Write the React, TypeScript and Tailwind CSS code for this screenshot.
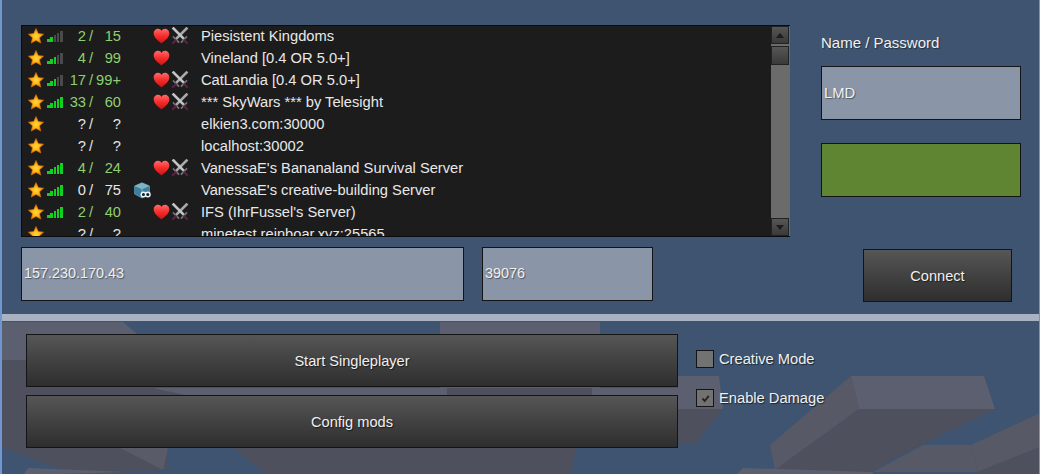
const font = "font-['Liberation_Sans',Arial,sans-serif]";

type Server = {
    cur: string;
    max: string;
    bars: number;
    name: string;
    tone: "green" | "white";
    heart?: boolean;
    swords?: boolean;
    creative?: boolean;
};

const servers: Server[] = [
    { cur: "2", max: "15", bars: 2, name: "Piesistent Kingdoms", tone: "green", heart: true, swords: true },
    { cur: "4", max: "99", bars: 3, name: "Vineland [0.4 OR 5.0+]", tone: "green", heart: true },
    { cur: "17", max: "99+", bars: 3, name: "CatLandia [0.4 OR 5.0+]", tone: "green", heart: true, swords: true },
    { cur: "33", max: "60", bars: 5, name: "*** SkyWars *** by Telesight", tone: "green", heart: true, swords: true },
    { cur: "?", max: "?", bars: 0, name: "elkien3.com:30000", tone: "white" },
    { cur: "?", max: "?", bars: 0, name: "localhost:30002", tone: "white" },
    { cur: "4", max: "24", bars: 5, name: "VanessaE's Bananaland Survival Server", tone: "green", heart: true, swords: true },
    { cur: "0", max: "75", bars: 5, name: "VanessaE's creative-building Server", tone: "white", creative: true },
    { cur: "2", max: "40", bars: 5, name: "IFS (IhrFussel's Server)", tone: "green", heart: true, swords: true },
    { cur: "?", max: "?", bars: 0, name: "minetest.reinboar.xyz:25565", tone: "white" },
];

const Star = () => (
    <svg width="16" height="16" viewBox="0 0 18 18">
        <defs>
            <radialGradient id="star" cx="50%" cy="54%" r="50%">
                <stop offset="0%" stopColor="#ffd83a" />
                <stop offset="50%" stopColor="#ffb81a" />
                <stop offset="100%" stopColor="#f07a08" />
            </radialGradient>
        </defs>
        <polygon
            points="9,.6 11.6,6.2 17.6,6.9 13,11 14.4,17 9,14 3.6,17 5,11 .4,6.9 6.4,6.2"
            fill="url(#star)"
            stroke="#d87008"
            strokeWidth="0.7"
        />
    </svg>
);

const Signal = ({ lit }: { lit: number }) => (
    <svg width="17" height="12" viewBox="0 0 17 12" shapeRendering="crispEdges">
        {[0, 1, 2, 3, 4].map((i) => (
            <rect
                key={i}
                x={i * 3.25}
                y={9 - i * 2}
                width="2.5"
                height={3 + i * 2}
                fill={i < lit ? "#10d020" : "#4a4a4a"}
            />
        ))}
    </svg>
);

const Heart = () => (
    <svg width="17" height="16" viewBox="0 0 17 16">
        <defs>
            <linearGradient id="heart" x1="0" y1="0" x2="0" y2="1">
                <stop offset="0%" stopColor="#ff6a6a" />
                <stop offset="50%" stopColor="#f52c2c" />
                <stop offset="100%" stopColor="#c81414" />
            </linearGradient>
        </defs>
        <path d="M8.5 15.5 C5 12.5 1 10 .7 5.8 C.5 2.5 3 .8 5 .8 C6.6 .8 7.8 1.7 8.5 3 C9.2 1.7 10.4 .8 12 .8 C14 .8 16.5 2.5 16.3 5.8 C16 10 12 12.5 8.5 15.5 Z" fill="url(#heart)" />
    </svg>
);

const Swords = () => (
    <svg width="18" height="18" viewBox="0 0 18 18">
        <g strokeLinecap="square">
            <path d="M15.5 1.5 L5.5 11.5" stroke="#a9a9ad" strokeWidth="2.6" />
            <path d="M2.5 1.5 L12.5 11.5" stroke="#c4c4c8" strokeWidth="2.6" />
            <path d="M2.5 10 L7.5 15" stroke="#77777b" strokeWidth="1.6" />
            <path d="M15.5 10 L10.5 15" stroke="#77777b" strokeWidth="1.6" />
            <path d="M4.5 13.5 L2 16" stroke="#5c2246" strokeWidth="2.2" />
            <path d="M13.5 13.5 L16 16" stroke="#5c2246" strokeWidth="2.2" />
        </g>
    </svg>
);

const Cube = () => (
    <svg width="17" height="17" viewBox="0 0 17 17">
        <polygon points="8,.8 15.5,4 15.5,12 8,16 .6,12 .6,4" fill="#3f7f9c" stroke="#5a9ab4" strokeWidth="0.8" />
        <polygon points="8,.8 15.5,4 8,7.2 .6,4" fill="#7db4c8" />
        <path d="M8 7.2 V16" stroke="#8cc0d2" strokeWidth="0.8" />
        <circle cx="9.5" cy="12.5" r="2.3" fill="#0f2530" stroke="#eef6fa" strokeWidth="1.4" />
        <circle cx="13.8" cy="12.5" r="2.3" fill="#0f2530" stroke="#eef6fa" strokeWidth="1.4" />
    </svg>
);

const Arrow = ({ down }: { down?: boolean }) => (
    <svg width="8" height="5" viewBox="0 0 8 5">
        <polygon points={down ? "0,0 8,0 4,5" : "0,5 8,5 4,0"} fill="#1c1c1c" />
    </svg>
);

const Row = ({ s }: { s: Server }) => {
    const color = s.tone === "green" ? "text-[#8ed070]" : "text-[#e6e6e6]";
    return (
        <div className="flex h-[22px] shrink-0 items-center text-[14.7px]">
            <div className="flex w-[22px] justify-end">
                <Star />
            </div>
            <div className="ml-[3px] w-[17px]">{s.bars > 0 && <Signal lit={s.bars} />}</div>
            <div className={`w-[22px] text-right ${color}`}>{s.cur}</div>
            <div className={`ml-[3px] w-[5px] ${color}`}>/</div>
            <div className={`w-[27px] text-right ${color}`}>{s.max}</div>
            <div className="ml-[13px] w-[19px]">{s.creative && <Cube />}</div>
            <div className="w-[18px]">{s.heart && <Heart />}</div>
            <div className="w-[30px]">{s.swords && <Swords />}</div>
            <div className="whitespace-pre text-[#e8e8e8]">{s.name}</div>
        </div>
    );
};

const Field = ({ value, className }: { value: string; className: string }) => (
    <div className={`flex items-center border border-[#141414] bg-[#8a96a8] pl-[2px] text-[#f0f0f0] [text-shadow:1px_1px_1px_#00000070] ${className}`}>
        {value}
    </div>
);

const Button = ({ label, className }: { label: string; className: string }) => (
    <div className={`flex items-center justify-center border border-[#141414] bg-gradient-to-b from-[#565656] to-[#2e2e2e] pt-[2px] text-[14.6px] text-[#f0f0f0] [text-shadow:1px_1px_1px_#00000090] ${className}`}>
        {label}
    </div>
);

const Check = ({ label, checked }: { label: string; checked?: boolean }) => (
    <div className="flex h-[18px] items-center gap-[5px]">
        <div className="flex h-[18px] w-[18px] items-center justify-center border border-[#141414] bg-[#727272]">
            {checked && (
                <svg width="9" height="9" viewBox="0 0 9 9">
                    <path d="M1.5 4.5 L3.7 7 L7.8 1.8" fill="none" stroke="#262626" strokeWidth="1.9" />
                </svg>
            )}
        </div>
        <span className="pb-[1px] text-[14.7px] leading-[18px] text-[#f0f0f0] [text-shadow:1px_1px_1px_#00000090]">{label}</span>
    </div>
);

// drawn game scene behind the lower half of the menu
const Blocks = () => (
    <svg className="absolute inset-0" width="1040" height="474" viewBox="0 0 1040 474">
        <polygon points="0,322 123,322 137,334 160,360 0,360" fill="#5c5f6f" />
        <polygon points="0,360 160,360 240,395 153,395 168,448 168,470 75,474 0,447" fill="#4f505e" />
        <polygon points="120,448 168,448 163,470" fill="#5a5b69" />
        <polygon points="28,468 127,472 60,474 24,474" fill="#5c5f6f" />
        <polygon points="153,388 440,388 440,322 600,322 600,388 680,388 680,395 185,395" fill="#5c5f6f" />
        <polygon points="447,388 592,388 592,395 447,395" fill="#4f505e" />
        <polygon points="233,448 577,448 570,474 267,474" fill="#4f505e" />
        <polygon points="678,376 719,376 723,409 678,409" fill="#5c5f6f" />
        <polygon points="678,409 723,409 695,444 678,444" fill="#4f505e" />
        <polygon points="851,376 984,376 995,409 859,409" fill="#5c5f6f" />
        <polygon points="851,376 859,409 775,470 770,445" fill="#585966" />
        <polygon points="859,409 995,409 890,460 873,472 775,470" fill="#4f505e" />
        <polygon points="923,445 971,445 978,472 873,472" fill="#585966" />
        <polygon points="971,445 1040,413 1040,447 978,472" fill="#585966" />
        <polygon points="978,472 1040,447 1040,474 975,474" fill="#4f505e" />
        <polygon points="737,474 743,468 873,472 873,474" fill="#5c5f6f" />
    </svg>
);

export default function App() {
    return (
        <div className={`relative h-[474px] w-[1040px] overflow-hidden bg-[#3e5470] ${font}`}>
            <Blocks />
            <div className="relative flex h-full flex-col border-l-2 border-r border-[#6f96cf]">
                {/* Join game tab */}
                <div className="h-[314px] bg-[#3e5470] pl-[19px] pt-[25px]">
                    <div className="flex">
                        <div className="flex h-[212px] w-[769px] border border-r-0 border-[#0c0c0c] bg-[#1c1c1c]">
                            <div className="-mt-px flex flex-1 flex-col overflow-hidden">
                                {servers.map((s) => (
                                    <Row key={s.name} s={s} />
                                ))}
                            </div>
                            <div className="flex w-[19px] shrink-0 flex-col bg-[#6b6b6b]">
                                <div className="flex h-[18px] w-[18px] items-center justify-center border border-[#222] bg-gradient-to-b from-[#565656] to-[#3a3a3a]">
                                    <Arrow />
                                </div>
                                <div className="mt-[2px] h-[19px] w-[18px] border border-[#222] bg-gradient-to-b from-[#565656] to-[#3a3a3a]" />
                                <div className="mt-auto flex h-[18px] w-[18px] items-center justify-center border border-[#222] bg-gradient-to-b from-[#565656] to-[#3a3a3a]">
                                    <Arrow down />
                                </div>
                            </div>
                        </div>
                        <div className="ml-[31px] flex w-[200px] flex-col">
                            <div className="mt-[10px] text-[15px] leading-[16px] text-[#f0f0f0] [text-shadow:1px_1px_1px_#00000070]">
                                Name / Password
                            </div>
                            <Field value="LMD" className="mt-[15px] h-[54px] w-[200px] pt-[1px] text-[14.8px]" />
                            <div className="mt-[23px] h-[54px] w-[200px] border border-[#141414] bg-[#5f8432]" />
                        </div>
                    </div>
                    <div className="mt-[10px] flex items-start">
                        <Field value="157.230.170.43" className="h-[54px] w-[443px] pb-[1px] text-[14.4px]" />
                        <Field value="39076" className="ml-[18px] h-[54px] w-[171px] pb-[1px] text-[14.4px]" />
                        <Button label="Connect" className="ml-[210px] mt-[2px] h-[53px] w-[149px]" />
                    </div>
                </div>
                <div className="h-[7px] bg-[#a8b2c0]" />
                {/* Singleplayer tab */}
                <div className="flex pl-[24px] pt-[13px]">
                    <div className="flex w-[652px] flex-col gap-[8px]">
                        <Button label="Start Singleplayer" className="h-[53px]" />
                        <Button label="Config mods" className="h-[53px]" />
                    </div>
                    <div className="ml-[18px] mt-[16px] flex flex-col gap-[21px]">
                        <Check label="Creative Mode" />
                        <Check label="Enable Damage" checked />
                    </div>
                </div>
            </div>
        </div>
    );
}
